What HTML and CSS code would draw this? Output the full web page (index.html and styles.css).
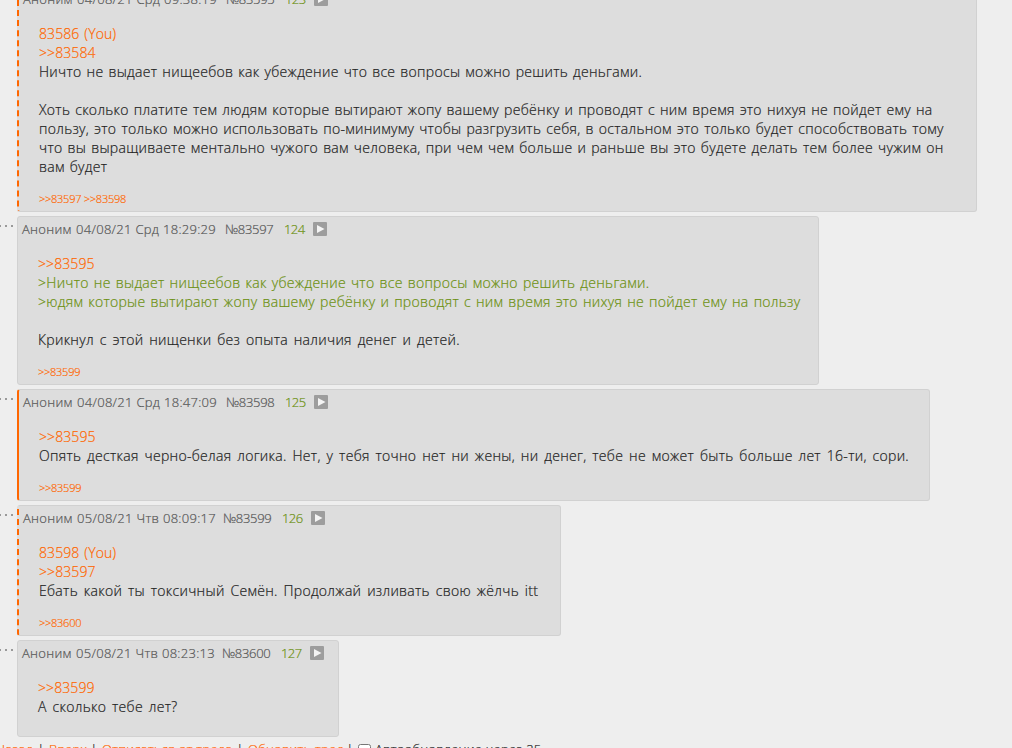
FILE: index.html
```html
<!DOCTYPE html>
<html lang="ru">
<head>
    <meta charset="utf-8">
    <title>Тред</title>
    <link rel="stylesheet" href="styles.css">
</head>
<body>
    <svg class="sprite">
        <symbol id="play" viewBox="0 0 14 14">
            <rect width="14" height="14" rx="1" fill="#9d9d9d"/>
            <path d="M4 3L11.5 7L4 11z" fill="#f4f4f4"/>
        </symbol>
        <symbol id="dots" viewBox="0 0 14 2">
            <path d="M0 0h1v2h-1zM5 0h2v2h-2zM11 0h2v2h-2z" fill="#999"/>
        </symbol>
    </svg>
    <div class="thread">
        <div class="row">
            <svg class="dots"><use href="#dots"/></svg>
            <div class="post post-first mine">
                <div class="details"><span class="name">Аноним</span><span class="date">04/08/21 Срд 09:38:19</span><span class="num">№83595</span><span class="count">123</span><svg class="play"><use href="#play"/></svg></div>
                <div class="message">
                    <div><a>83586 (You)</a></div>
                    <div><a>&gt;&gt;83584</a></div>
                    <div>Ничто не выдает нищеебов как убеждение что все вопросы можно решить деньгами.</div>
                    <br>
                    <div>Хоть сколько платите тем людям которые вытирают жопу вашему ребёнку и проводят с ним время это нихуя не пойдет ему на</div>
                    <div>пользу, это только можно использовать по-минимуму чтобы разгрузить себя, в остальном это только будет способствовать тому</div>
                    <div>что вы выращиваете ментально чужого вам человека, при чем чем больше и раньше вы это будете делать тем более чужим он</div>
                    <div>вам будет</div>
                </div>
                <div class="refs"><a>&gt;&gt;83597</a> <a>&gt;&gt;83598</a></div>
            </div>
        </div>
        <div class="row">
            <svg class="dots"><use href="#dots"/></svg>
            <div class="post post-quote">
                <div class="details"><span class="name">Аноним</span><span class="date">04/08/21 Срд 18:29:29</span><span class="num">№83597</span><span class="count">124</span><svg class="play"><use href="#play"/></svg></div>
                <div class="message">
                    <div><a>&gt;&gt;83595</a></div>
                    <div class="quote">&gt;Ничто не выдает нищеебов как убеждение что все вопросы можно решить деньгами.</div>
                    <div class="quote">&gt;юдям которые вытирают жопу вашему ребёнку и проводят с ним время это нихуя не пойдет ему на пользу</div>
                    <br>
                    <div class="loose">Крикнул с этой нищенки без опыта наличия денег и детей.</div>
                </div>
                <div class="refs"><a>&gt;&gt;83599</a></div>
            </div>
        </div>
        <div class="row">
            <svg class="dots"><use href="#dots"/></svg>
            <div class="post post-reply answer">
                <div class="details"><span class="name">Аноним</span><span class="date">04/08/21 Срд 18:47:09</span><span class="num">№83598</span><span class="count">125</span><svg class="play"><use href="#play"/></svg></div>
                <div class="message">
                    <div><a>&gt;&gt;83595</a></div>
                    <div class="loose">Опять десткая черно-белая логика. Нет, у тебя точно нет ни жены, ни денег, тебе не может быть больше лет 16-ти, сори.</div>
                </div>
                <div class="refs"><a>&gt;&gt;83599</a></div>
            </div>
        </div>
        <div class="row">
            <svg class="dots"><use href="#dots"/></svg>
            <div class="post post-toxic mine">
                <div class="details"><span class="name">Аноним</span><span class="date thu">05/08/21 Чтв 08:09:17</span><span class="num">№83599</span><span class="count">126</span><svg class="play"><use href="#play"/></svg></div>
                <div class="message">
                    <div><a>83598 (You)</a></div>
                    <div><a>&gt;&gt;83597</a></div>
                    <div class="loose">Ебать какой ты токсичный Семён. Продолжай изливать свою жёлчь itt</div>
                </div>
                <div class="refs"><a>&gt;&gt;83600</a></div>
            </div>
        </div>
        <div class="row">
            <svg class="dots"><use href="#dots"/></svg>
            <div class="post post-last">
                <div class="details"><span class="name">Аноним</span><span class="date thu">05/08/21 Чтв 08:23:13</span><span class="num">№83600</span><span class="count">127</span><svg class="play"><use href="#play"/></svg></div>
                <div class="message">
                    <div><a>&gt;&gt;83599</a></div>
                    <div class="loose">А сколько тебе лет?</div>
                </div>
            </div>
        </div>
    </div>
    <div class="nav">
        <a class="nav-back">Назад</a><i>|</i><a class="nav-up">Вверх</a><i>|</i><a class="nav-unsub">Отписаться от треда</a><i>|</i><a class="nav-update">Обновить тред</a><i>|</i><input type="checkbox" class="check"><span>Автообновление через 25</span>
    </div>
</body>
</html>
```
FILE: styles.css
```css
html, body {
    height: 100%;
    overflow: hidden;
}
body {
    margin: 0;
    background: #eee;
    color: #222;
    font-family: "Open Sans", "Noto Sans", sans-serif;
    font-size: 14px;
    font-weight: 300;
    line-height: 19px;
    -webkit-text-stroke: 0.2px currentColor;
}
a {
    color: #ff6600;
}
.sprite {
    display: none;
}
.thread {
    display: flex;
    flex-direction: column;
    gap: 4px;
    margin-top: -14px;
}
.row {
    display: flex;
    align-items: flex-start;
}
.dots {
    flex: none;
    width: 14px;
    height: 2px;
    margin: 9px 3px 0 0;
}
.post {
    box-sizing: border-box;
    background: #ddd;
    border: 1px solid #d1d1d1;
    border-radius: 3px;
    padding: 3px 0 0 4px;
}
.mine {
    border-left: 2px dashed #ff6600;
}
.answer {
    border-left: 2px solid #ff6600;
}
.details {
    display: flex;
    align-items: center;
    height: 19px;
    margin-top: -1px;
    color: #555;
    font-size: 13px;
    white-space: nowrap;
}
.details span {
    padding-top: 2px;
}
.name {
    width: 54px;
    letter-spacing: 0.3px;
}
.date {
    width: 149px;
    letter-spacing: 0.3px;
}
.thu {
    width: 146px;
}
.num {
    width: 59px;
    letter-spacing: -0.3px;
}
.count {
    width: 29px;
    color: #6b9010;
    letter-spacing: -0.6px;
}
.play {
    width: 14px;
    height: 14px;
}
.message {
    padding: 16px 0 0 16px;
    white-space: nowrap;
    letter-spacing: 0.3px;
    word-spacing: 1.1px;
}
.message a {
    letter-spacing: 0.1px;
}
.loose {
    word-spacing: 1.9px;
}
.quote {
    color: #6b9010;
}
.refs {
    margin: 13px 0 0 16px;
    font-size: 11px;
    letter-spacing: -0.25px;
}
.post-first {
    width: 960px;
    height: 226px;
}
.post-quote {
    width: 802px;
    height: 169px;
}
.post-reply {
    width: 913px;
    height: 112px;
}
.post-toxic {
    width: 544px;
    height: 131px;
}
.post-last {
    width: 322px;
    height: 97px;
}
.nav {
    display: flex;
    height: 19px;
    margin-top: 3px;
    font-size: 13px;
    letter-spacing: 0.25px;
    white-space: nowrap;
}
.nav i {
    width: 16px;
    font-style: normal;
    text-align: center;
}
.nav-back {
    width: 33px;
    direction: rtl;
}
.nav-up {
    width: 37px;
}
.nav-unsub {
    width: 130px;
}
.nav-update {
    width: 94px;
}
.check {
    width: 13px;
    height: 13px;
    margin: 4px 4px 0 0;
}
```
